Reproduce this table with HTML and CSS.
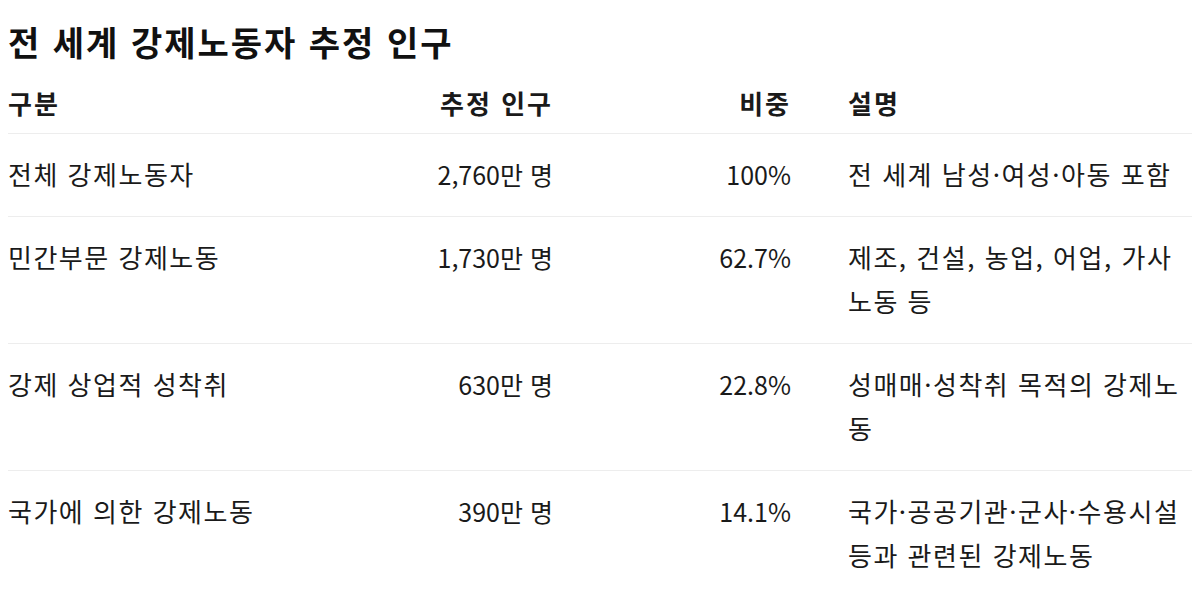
FILE: index.html
```html
<!DOCTYPE html>
<html lang="ko">
<head>
<meta charset="utf-8">
<link rel="stylesheet" href="styles.css">
</head>
<body>
<h1 class="title">전 세계 강제노동자 추정 인구</h1>
<div class="table">
  <div class="row head">
    <div class="cell c1">구분</div>
    <div class="cell num">추정 인구</div>
    <div class="cell num">비중</div>
    <div class="cell desc">설명</div>
  </div>
  <div class="row">
    <div class="cell c1">전체 강제노동자</div>
    <div class="cell num">2,760만 명</div>
    <div class="cell num">100%</div>
    <div class="cell desc">전 세계 남성·여성·아동 포함</div>
  </div>
  <div class="row">
    <div class="cell c1">민간부문 강제노동</div>
    <div class="cell num">1,730만 명</div>
    <div class="cell num">62.7%</div>
    <div class="cell desc">제조, 건설, 농업, 어업, 가사노동 등</div>
  </div>
  <div class="row">
    <div class="cell c1">강제 상업적 성착취</div>
    <div class="cell num">630만 명</div>
    <div class="cell num">22.8%</div>
    <div class="cell desc">성매매·성착취 목적의 강제노동</div>
  </div>
  <div class="row last">
    <div class="cell c1">국가에 의한 강제노동</div>
    <div class="cell num">390만 명</div>
    <div class="cell num">14.1%</div>
    <div class="cell desc">국가·공공기관·군사·수용시설 등과 관련된 강제노동</div>
  </div>
</div>
</body>
</html>
```
FILE: styles.css
```css
body {
  margin: 8px;
  background: #ffffff;
  color: #1a1a1a;
  font-family: "Noto Sans CJK KR", "Noto Sans", sans-serif;
}
.title {
  margin: 14px 0 0 0;
  font-size: 34px;
  line-height: 40px;
  font-weight: 700;
  letter-spacing: 2px;
  color: #111111;
}
.table {
  margin-top: 11px;
  width: 1184px;
}
.row {
  display: grid;
  grid-template-columns: 292px 253px 238px 401px;
  border-bottom: 1px solid #ededed;
}
.row.last {
  border-bottom: none;
}
.cell {
  padding: 18px 0 20px 0;
  font-size: 26px;
  line-height: 44px;
  letter-spacing: 1.5px;
}
.num {
  text-align: right;
  font-size: 25px;
  letter-spacing: 0;
}
.head .cell {
  padding: 8px 0 9px 0;
  font-weight: 700;
  font-size: 26px;
  line-height: 43px;
  letter-spacing: 2px;
}
.desc,
.head .desc {
  padding-left: 57px;
}
```
